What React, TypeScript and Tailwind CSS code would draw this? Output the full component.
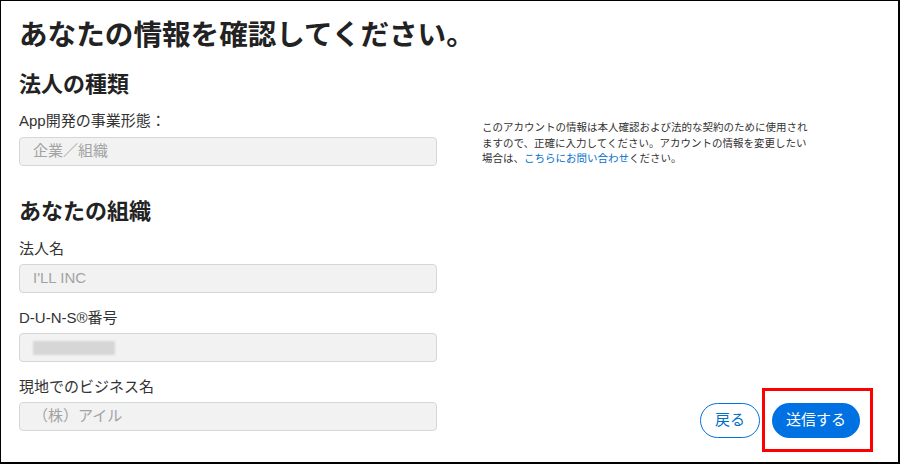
import React from 'react';

const font = "font-['Liberation_Sans','Noto_Sans_CJK_JP',sans-serif]";

function Field({ label, value, top, blurred }: { label: string; value?: string; top: string; blurred?: boolean }) {
  return (
    <div className={top}>
      <div className="text-[15px] leading-[20px] text-[#333]">{label}</div>
      <div className="mt-[5px] h-[29px] rounded-[4px] border border-[#d6d6d6] bg-[#f2f2f2] pl-[13px] flex items-center">
        {blurred ? (
          <div className="h-[14px] w-[82px] bg-[#d6d6d6] blur-[1px]" />
        ) : (
          <span className="text-[15px] text-[#a3a3a3]">{value}</span>
        )}
      </div>
    </div>
  );
}

export default function App() {
  return (
    <div className={`${font} w-[900px] h-[464px] bg-white border-l border-t border-r-2 border-b-2 border-black flex flex-col`}>
      <h1 className="mt-[16px] pl-[18px] text-[28.6px] leading-[36px] font-bold text-[#222]">
        あなたの情報を確認してください。
      </h1>
      <div className="flex flex-1">
        <div className="ml-[18px] w-[418px]">
          <h2 className="mt-[18px] text-[22px] leading-[28px] font-bold text-[#222]">法人の種類</h2>
          <div className="mt-[12px]">
            <div className="text-[15px] leading-[20px] text-[#333]">App開発の事業形態：</div>
            <div className="mt-[6px] h-[29px] rounded-[4px] border border-[#d6d6d6] bg-[#f2f2f2] pl-[13px] flex items-center">
              <span className="text-[15px] text-[#a3a3a3]">企業／組織</span>
            </div>
          </div>
          <h2 className="mt-[32px] text-[22px] leading-[28px] font-bold text-[#222]">あなたの組織</h2>
          <Field top="mt-[13px]" label="法人名" value="I'LL INC" />
          <Field top="mt-[15px]" label="D-U-N-S®番号" blurred />
          <Field top="mt-[15px]" label="現地でのビジネス名" value="（株）アイル" />
        </div>
        <div className="ml-[45px] flex-1 flex flex-col pr-[38px] pb-[24px]">
          <p className="mt-[67px] text-[10.5px] leading-[15.5px] text-[#333] whitespace-nowrap">
            このアカウントの情報は本人確認および法的な契約のために使用され
            <br />
            ますので、正確に入力してください。アカウントの情報を変更したい
            <br />
            場合は、<a className="text-[#0070c9]">こちらにお問い合わせ</a>ください。
          </p>
          <div className="mt-auto flex justify-end gap-[12px]">
            <button className="h-[35px] w-[60px] rounded-full border border-[#0071e3] text-[15px] text-[#0070c9] bg-white">
              戻る
            </button>
            <div className="relative">
              <button className="h-[35px] w-[88px] rounded-full bg-[#0071e3] text-[15px] text-white">
                送信する
              </button>
              <span className="absolute -left-[10px] -top-[15px] -right-[13px] -bottom-[14px] border-[3px] border-[#ff0000]" />
            </div>
          </div>
        </div>
      </div>
    </div>
  );
}
